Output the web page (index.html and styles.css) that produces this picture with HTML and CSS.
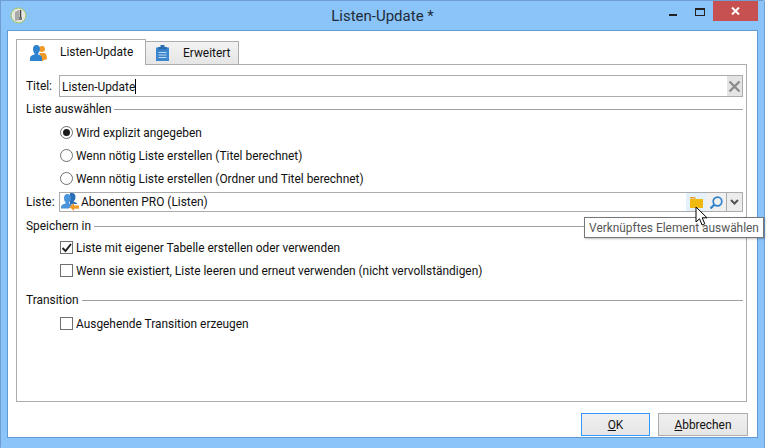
FILE: index.html
```html
<!DOCTYPE html>
<html lang="de">
<head>
<meta charset="utf-8">
<title>Listen-Update</title>
<link rel="stylesheet" href="styles.css">
</head>
<body>
<div class="window">
  <header class="titlebar">
    <svg class="app-icon" width="17" height="17" viewBox="0 0 17 17"><circle cx="8.500" cy="8.500" r="7.500" fill="#e6e6e0" stroke="#9cc45c"/><path d="M5 5l4-2v10l-4 1z" fill="#a8a8a8"/><path d="M10.500 3v7" stroke="#444" stroke-width="1.500" fill="none"/><path d="M9 10h3v3H9z" fill="#777"/></svg>
    <div class="title">Listen-Update *</div>
    <div class="win-buttons">
      <div class="wb wb-min"><span class="min-glyph"></span></div>
      <div class="wb wb-max"><span class="max-glyph"></span></div>
      <div class="wb wb-close"><svg width="9" height="8" viewBox="0 0 9 8"><path d="M1 .5l7 7M8 .5l-7 7" stroke="#fff" stroke-width="2" fill="none"/></svg></div>
    </div>
  </header>
  <div class="client">
    <div class="tabs">
      <div class="tab tab-active">
        <svg width="17" height="16" viewBox="0 0 17 16"><circle cx="12" cy="4" r="3" fill="#f09a28"/><path d="M10 16c0-2 .5-2.500 1-3.500S10 10 9 8h6c1 1 2 3 2 6-1 .5-2 1-3 1l-1 1z" fill="#f09a28"/><path d="M6.500 0C9 0 10 2 10 4s-.8 3.300-1.800 4.200V9.500c2 .5 3.800 1.500 3.800 3.500v3H0v-3c0-2 2-3 4.500-3.500V8.200C3.500 7.300 3 6 3 4s1-4 3.500-4z" fill="#2d83d0"/></svg>
        <span>Listen-Update</span>
      </div>
      <div class="tab tab-idle">
        <svg width="13" height="16" viewBox="0 0 13 16"><path d="M0 2.500h13V16H0z" fill="#3c86cf"/><path d="M4.500 0h4v2H11v2.500H2V2h2.500z" fill="#2a6cb0"/><path d="M2.500 7.500h8M2.500 10h8M2.500 12.500h8" stroke="#bcd8f2" stroke-width="1.200"/></svg>
        <span>Erweitert</span>
      </div>
    </div>
    <main class="pane">
      <div class="field-row">
        <label class="field-label">Titel:</label>
        <div class="input">
          <span class="input-text">Listen-Update<span class="caret"></span></span>
          <span class="clear"><svg width="13" height="13" viewBox="0 0 13 13"><path d="M1.500 1.500l10 10M11.500 1.500l-10 10" stroke="#8c8c8c" stroke-width="2.400" fill="none"/></svg></span>
        </div>
      </div>

      <div class="legend legend-first"><span>Liste auswählen</span></div>
      <div class="options options-radio">
        <div class="opt"><span class="radio radio-on"></span>Wird explizit angegeben</div>
        <div class="opt"><span class="radio"></span>Wenn nötig Liste erstellen (Titel berechnet)</div>
        <div class="opt"><span class="radio"></span>Wenn nötig Liste erstellen (Ordner und Titel berechnet)</div>
      </div>

      <div class="field-row field-list">
        <label class="field-label">Liste:</label>
        <div class="input">
          <svg class="list-icon" width="18" height="18" viewBox="0 0 18 18"><path d="M11 0c2.500 0 3.500 2 3.500 4s-1 3.500-2 4.500c1.500.5 3 1 4 2.500H9V0z" fill="#2a6fb8"/><path d="M6.500 1C9 1 10 3 10 5s-.8 3.300-1.800 4.200v1.300c1.500.3 2.800 1 3.300 1.500L8 15.500H0V14c0-2 2-3 4.500-3.500V9.200C3.500 8.300 3 7 3 5s1-4 3.500-4z" fill="#4a94dc"/><path d="M8.500 14l4.500-4v2.500h5v3.200h-5V18z" fill="#f09a28"/></svg>
          <span class="input-text">Abonenten PRO (Listen)</span>
          <span class="tool tool-hover"><svg width="13" height="11" viewBox="0 0 13 11"><path d="M0 0h5l1.200 1.500H0z" fill="#ee9a2c"/><path d="M0 2h13v9H0z" fill="#f0b90f"/></svg></span>
          <span class="tool"><svg class="lens" width="14" height="14" viewBox="0 0 14 14"><circle cx="8.500" cy="5.500" r="4.300" fill="none" stroke="#2f80cc" stroke-width="1.700"/><path d="M5.500 8.500L1.500 12.500" stroke="#2f80cc" stroke-width="2.200"/></svg></span>
          <span class="drop"><svg width="9" height="6" viewBox="0 0 9 6"><path d="M1 1l3.500 3.500L8 1" fill="none" stroke="#555" stroke-width="2"/></svg></span>
        </div>
      </div>

      <div class="legend legend-save"><span>Speichern in</span></div>
      <div class="options options-check">
        <div class="opt"><span class="check"><svg width="11" height="10" viewBox="0 0 11 10"><path d="M1.500 5l3 3L10 1" fill="none" stroke="#222" stroke-width="2"/></svg></span>Liste mit eigener Tabelle erstellen oder verwenden</div>
        <div class="opt"><span class="check"></span>Wenn sie existiert, Liste leeren und erneut verwenden (nicht vervollständigen)</div>
      </div>

      <div class="legend legend-trans"><span>Transition</span></div>
      <div class="options options-single">
        <div class="opt"><span class="check"></span>Ausgehende Transition erzeugen</div>
      </div>
    </main>
    <footer class="footer">
      <button class="btn btn-default"><u>O</u>K</button>
      <button class="btn btn-cancel"><u>A</u>bbrechen</button>
    </footer>
  </div>
  <div class="tooltip">Verknüpftes Element auswählen</div>
  <svg class="cursor" width="14" height="21" viewBox="0 0 14 21"><path d="M1 1v15l3.500-3.200 2.600 6.200 2.700-1.200-2.600-6h4.800z" fill="#fff" stroke="#000" stroke-width="1"/></svg>
</div>
</body>
</html>
```

FILE: styles.css
```css
* { box-sizing: border-box; }
html, body { margin: 0; padding: 0; background: #fff; }
body {
  width: 781px;
  height: 448px;
  overflow: hidden;
  font-family: Roboto, "Open Sans", sans-serif;
  font-size: 11.9px;
  color: #111;
}
.window {
  position: relative;
  width: 765px;
  height: 448px;
  background: #8ac4f8;
  border: 1px solid #6f9fd0;
  border-bottom-color: #8ac4f8;
  border-top-right-radius: 2px;
  padding: 0 6px 9px 6px;
  display: flex;
  flex-direction: column;
}
.titlebar {
  position: relative;
  height: 29px;
  display: flex;
  align-items: center;
  justify-content: center;
  flex: none;
}
.app-icon { position: absolute; left: 3px; top: 6px; }
.title { font-size: 15px; color: #1f2b3a; margin-top: 1px; }
.win-buttons {
  position: absolute;
  right: 0;
  top: 0;
  display: flex;
}
.wb { height: 20px; display: flex; align-items: center; justify-content: center; }
.wb-min { width: 28px; }
.min-glyph { width: 8px; height: 2px; background: #222; margin-top: 8px; }
.wb-max { width: 26px; }
.max-glyph { width: 10px; height: 8px; border: 1px solid #222; border-top-width: 2px; margin-top: 2px; }
.wb-close { width: 45px; background: #c75050; }
.client {
  flex: 1;
  background: #fff;
  border: 1px solid #5f9ad2;
  padding: 8px 10px 0 8px;
  display: flex;
  flex-direction: column;
  min-height: 0;
}
.tabs { display: flex; height: 25px; flex: none; align-items: flex-end; position: relative; z-index: 1; }
.tab { display: flex; align-items: center; border: 1px solid #acacac; border-bottom: 0; }
.tab-active {
  width: 130px;
  height: 26px;
  margin-bottom: -1px;
  background: #fff;
  padding-left: 13px;
  gap: 13px;
}
.tab-active span { position: relative; top: -1px; }
.tab-idle {
  width: 94px;
  height: 23px;
  margin-left: -1px;
  background: linear-gradient(#f2f2f2, #e6e6e6);
  padding-left: 10px;
  gap: 14px;
}
.pane {
  height: 338px;
  flex: none;
  border: 1px solid #acacac;
  padding: 10px 3px 0 9px;
  display: flex;
  flex-direction: column;
}
.field-row { display: flex; align-items: center; height: 22px; flex: none; }
.field-label { width: 33px; flex: none; }
.input {
  flex: 1;
  height: 100%;
  border: 1px solid #acacac;
  display: flex;
  align-items: center;
  padding-left: 2px;
  min-width: 0;
}
.input-text { flex: 1; position: relative; white-space: nowrap; }
.caret { display: inline-block; width: 1px; height: 15px; background: #000; vertical-align: -3px; }
.clear {
  width: 15px;
  height: 20px;
  background: #e4e4e4;
  display: flex;
  align-items: center;
  justify-content: center;
}
.legend {
  display: flex;
  align-items: center;
  height: 16px;
  flex: none;
  gap: 3px;
}
.legend::after { content: ""; flex: 1; height: 1px; background: #a0a0a0; }
.legend-first { margin-top: 4px; }
.legend-save { margin-top: 6px; }
.legend-trans { margin-top: 10px; }
.options { padding-left: 34px; flex: none; }
.options-radio { margin-top: 4px; }
.options-check { margin-top: 2px; }
.options-single { margin-top: 4px; }
.opt { display: flex; align-items: center; height: 23px; white-space: nowrap; }
.radio {
  width: 13px;
  height: 13px;
  border: 1px solid #707070;
  border-radius: 50%;
  background: #fff;
  margin-right: 3px;
  flex: none;
  display: flex;
  align-items: center;
  justify-content: center;
}
.radio-on::before { content: ""; width: 7px; height: 7px; border-radius: 50%; background: #1a1a1a; }
.check {
  width: 13px;
  height: 13px;
  border: 1px solid #707070;
  background: #fff;
  margin-right: 3px;
  flex: none;
  display: flex;
  align-items: center;
  justify-content: center;
}
.field-list { margin-top: 2px; height: 20px; }
.list-icon { margin: 0 2px 0 -1px; flex: none; }
.tool {
  width: 20px;
  height: 18px;
  display: flex;
  align-items: center;
  justify-content: center;
  background: #f0f0f0;
}
.tool-hover { background: #e4f1fb; }
.lens { margin-top: 2px; }
.drop {
  width: 17px;
  height: 20px;
  margin: -1px -1px -1px 0;
  background: #ececec;
  border: 1px solid #acacac;
  display: flex;
  align-items: center;
  justify-content: center;
}
.footer {
  flex: 1;
  display: flex;
  justify-content: flex-end;
  align-items: flex-start;
  gap: 8px;
  padding: 11px 0 0 0;
  margin-right: -1px;
}
.btn {
  height: 23px;
  font: inherit;
  color: #111;
  padding: 0;
  background: linear-gradient(#f0f0f0, #e5e5e5);
  border: 1px solid #acacac;
}
.btn-default { width: 69px; border-color: #3399ff; }
.btn-cancel { width: 90px; }
.tooltip {
  position: absolute;
  left: 583px;
  top: 216px;
  width: 180px;
  height: 21px;
  background: #fff;
  border: 1px solid #767676;
  box-shadow: 1px 1px 2px rgba(0,0,0,.25);
  display: flex;
  align-items: center;
  justify-content: center;
  color: #575757;
  white-space: nowrap;
  z-index: 2;
}
.cursor { position: absolute; left: 694px; top: 205px; z-index: 3; }
```
